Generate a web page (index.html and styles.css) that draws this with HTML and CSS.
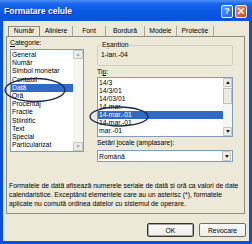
FILE: index.html
```html
<html>

<head>
    <title>Formatare celule</title>
    <meta charset="utf-8">
    <link rel="stylesheet" href="styles.css">
</head>

<body>
    <div class="window">
        <div class="titlebar">
            <span class="title">Formatare celule</span>
            <span class="cbtn help">?</span>
            <span class="cbtn close">
                <svg width="8" height="8" viewBox="0 0 8 8">
                    <path d="M1.2 1.2 L6.8 6.8 M6.8 1.2 L1.2 6.8" stroke="#fff" stroke-width="1.6" />
                </svg>
            </span>
        </div>
        <div class="client">
            <div class="tabs">
                <span class="tab active">Număr</span>
                <span class="tab">Aliniere</span>
                <span class="tab">Font</span>
                <span class="tab">Bordură</span>
                <span class="tab">Modele</span>
                <span class="tab">Protecție</span>
            </div>
            <div class="panel">
                <div class="columns">
                    <div class="col-left">
                        <div class="label"><u>C</u>ategorie:</div>
                        <div class="listbox category">
                            <ul class="items">
                                <li>General</li>
                                <li>Număr</li>
                                <li>Simbol monetar</li>
                                <li>Contabil</li>
                                <li class="sel">Dată</li>
                                <li>Oră</li>
                                <li>Procentaj</li>
                                <li>Fracție</li>
                                <li>Științific</li>
                                <li>Text</li>
                                <li>Special</li>
                                <li>Particularizat</li>
                            </ul>
                            <div class="vscroll disabled">
                                <span class="sbtn"><i class="arrow up"></i></span>
                                <span class="sbtn"><i class="arrow down"></i></span>
                            </div>
                        </div>
                    </div>
                    <div class="col-right">
                        <fieldset class="sample">
                            <legend>Eșantion</legend>
                            <div class="sample-value">1-ian.-04</div>
                        </fieldset>
                        <div class="label">Ti<u>p</u>:</div>
                        <div class="listbox types">
                            <ul class="items">
                                <li>14/3</li>
                                <li>14/3/01</li>
                                <li>14/03/01</li>
                                <li>14-mar.</li>
                                <li class="sel">14-mar.-01</li>
                                <li>14-mar.-01</li>
                                <li>mar.-01</li>
                            </ul>
                            <div class="vscroll">
                                <span class="sbtn"><i class="arrow up"></i></span>
                                <span class="thumb"></span>
                                <span class="track"></span>
                                <span class="sbtn"><i class="arrow down"></i></span>
                            </div>
                        </div>
                        <div class="label">Setări <u>l</u>ocale (amplasare):</div>
                        <div class="combo">
                            <span class="combo-text">Română</span>
                            <span class="sbtn"><i class="arrow down"></i></span>
                        </div>
                    </div>
                </div>
                <p class="desc">
                    Formatele de dată afișează numerele seriale de dată și oră ca valori de date<br>
                    calendaristice. Exceptând elementele care au un asterisc (*), formatele<br>
                    aplicate nu comută ordinea datelor cu sistemul de operare.
                </p>
                <!-- hand drawn marks over the screenshot -->
                <svg class="marks" width="239" height="178" viewBox="0 0 239 178">
                    <ellipse cx="28" cy="53" rx="30" ry="11.5" />
                    <ellipse cx="112" cy="79.5" rx="29" ry="9.5" />
                </svg>
            </div>
            <div class="buttons">
                <span class="btn default">OK</span>
                <span class="btn">Revocare</span>
            </div>
        </div>
    </div>
</body>

</html>
```

FILE: styles.css
```css
* {
    box-sizing: border-box;
}

body {
    margin: 0px;
    font-family: "Liberation Sans", Arial, sans-serif;
    font-size: 6.8px;
    color: #000;
}

.window {
    width: 252px;
    height: 244px;
    background: #0751dc;
    display: flex;
    flex-direction: column;
}

.titlebar {
    height: 21px;
    flex: none;
    display: flex;
    align-items: center;
    gap: 2px;
    padding: 1px 5px 0 4px;
    background: linear-gradient(180deg, #4a92f7 0%, #1a66ec 18%, #0b58e4 55%, #0a52da 100%);
}

.title {
    flex: 1;
    color: #fff;
    font-weight: bold;
    font-size: 8.5px;
    text-shadow: 1px 1px 0 #0b2c8c;
}

.cbtn {
    width: 12px;
    height: 13px;
    border: 1px solid #fff;
    border-radius: 2px;
    display: flex;
    align-items: center;
    justify-content: center;
    color: #fff;
    font-weight: bold;
    font-size: 9px;
}

.help {
    background: linear-gradient(135deg, #5d9bff, #1f5fe8);
}

.close {
    background: linear-gradient(135deg, #ec8a68, #d8431c);
}

.client {
    flex: 1;
    margin: 0 3px 3px 3px;
    background: #ece9d8;
    display: flex;
    flex-direction: column;
}

.tabs {
    display: flex;
    height: 11px;
    margin: 4px 0 0 5px;
}

.tab {
    height: 10px;
    margin-top: 1px;
    line-height: 10px;
    text-align: center;
    border-right: 1px solid #a9a798;
}

.tab.active {
    border: 1px solid #8b8a80;
    border-bottom: none;
    line-height: 8px;
}

.tab:nth-child(1) { width: 32px; }
.tab:nth-child(2) { width: 33px; }
.tab:nth-child(3) { width: 33px; }
.tab:nth-child(4) { width: 39px; }
.tab:nth-child(5) { width: 32px; }
.tab:nth-child(6) { width: 37px; }

.panel {
    position: relative;
    height: 178px;
    margin: 0 4px 0 3px;
    border: 1px solid #8d8d84;
    padding-top: 2px;
}

.columns {
    display: flex;
    padding-left: 3px;
}

.col-left {
    width: 74px;
}

.col-right {
    width: 136px;
    margin-left: 13px;
    padding-top: 2px;
}

.label {
    height: 8px;
    line-height: 8px;
}

.listbox {
    display: flex;
    background: #fff;
    border: 1px solid #7f9db9;
}

.category {
    height: 103px;
    margin-top: 2px;
}

.types {
    height: 60px;
    margin-top: 1px;
}

.items {
    flex: 1;
    list-style: none;
    margin: 0px;
    padding: 1px 0 0 0;
}

.items li {
    padding-left: 1px;
    white-space: nowrap;
}

.category li {
    height: 8.2px;
    line-height: 8.2px;
}

.types li {
    height: 8px;
    line-height: 8px;
}

.items li.sel {
    background: #316ac5;
    color: #fff;
}

.vscroll {
    display: flex;
    flex-direction: column;
    justify-content: space-between;
    width: 9px;
    background: #f6f5ef;
}

.category .vscroll {
    width: 10px;
}

.sbtn {
    flex: none;
    height: 9px;
    display: flex;
    align-items: center;
    justify-content: center;
    background: #eeede5;
    border: 1px solid #c9c7ba;
    border-radius: 1px;
}

.thumb {
    flex: none;
    height: 16px;
    margin-top: 1px;
    background: #ecebe3;
    border: 1px solid #c3c1b4;
}

.track {
    flex: 1;
}

.arrow {
    width: 0px;
    height: 0px;
    border-left: 2.5px solid transparent;
    border-right: 2.5px solid transparent;
}

.arrow.up {
    border-bottom: 3px solid #222;
}

.arrow.down {
    border-top: 3px solid #222;
}

.disabled .arrow.up {
    border-bottom-color: #b5b3a8;
}

.disabled .arrow.down {
    border-top-color: #b5b3a8;
}

.sample {
    margin: 0 0 2px 0;
    padding: 0 0 0 2px;
    height: 25px;
    border: 1px solid #d0d0bf;
    border-radius: 2px;
}

.sample legend {
    padding: 0 1px;
    margin-left: 1px;
    line-height: 8px;
}

.sample-value {
    line-height: 8px;
    padding-top: 2px;
    margin-left: 1px;
}

.types + .label {
    margin-top: 2px;
}

.combo {
    height: 12px;
    margin-top: 3px;
    display: flex;
    align-items: center;
    background: #fff;
    border: 1px solid #7f9db9;
    padding: 0 1px 0 1px;
}

.combo-text {
    flex: 1;
}

.combo .sbtn {
    width: 9px;
    height: 10px;
}

.desc {
    margin: 18.5px 0 0 2px;
    line-height: 9px;
    white-space: nowrap;
}

.marks {
    position: absolute;
    left: 0px;
    top: 0px;
    overflow: visible;
    pointer-events: none;
}

.marks ellipse {
    fill: none;
    stroke: #1a2750;
    stroke-width: 1.3;
}

.buttons {
    display: flex;
    justify-content: flex-end;
    gap: 5px;
    margin: 9px 3px 0 0;
}

.btn {
    width: 47px;
    height: 14px;
    display: flex;
    align-items: center;
    justify-content: center;
    background: linear-gradient(180deg, #fbfbf8, #eeede6);
    border: 1px solid #6e6e68;
    border-radius: 2px;
}

.btn.default {
    border-color: #333;
    box-shadow: inset 0 0 0 1px #a8a69a;
}
```
